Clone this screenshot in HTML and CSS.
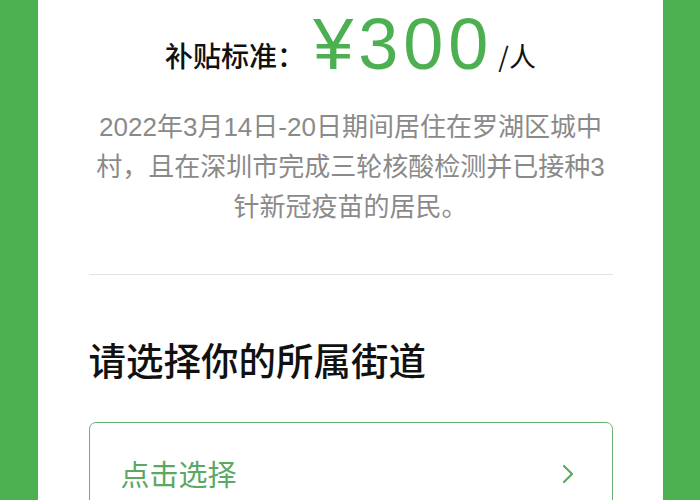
FILE: index.html
```html
<!DOCTYPE html>
<html lang="zh-CN">
<head>
    <meta charset="UTF-8">
    <meta name="viewport" content="width=device-width, initial-scale=1.0">
    <title>补贴申领</title>
    <link rel="stylesheet" href="styles.css">
</head>
<body>
    <div class="card">
        <div class="subsidy">
            <div class="price-row">
                <span class="price-label">补贴标准：</span>
                <span class="price-amount">¥300</span>
                <span class="price-unit">/人</span>
            </div>
            <p class="subsidy-desc">2022年3月14日-20日期间居住在罗湖区城中村，且在深圳市完成三轮核酸检测并已接种3针新冠疫苗的居民。</p>
        </div>

        <div class="street-section">
            <h2 class="section-title">请选择你的所属街道</h2>
            <div class="select-box">
                <span class="select-text">点击选择</span>
                <svg class="chevron" width="12" height="20" viewBox="0 0 12 20">
                    <polyline points="2,2 10,10 2,18" fill="none" stroke="#5aa862" stroke-width="2.2" stroke-linecap="round" stroke-linejoin="round"/>
                </svg>
            </div>
        </div>
    </div>
</body>
</html>
```

FILE: styles.css
```css
* {
    margin: 0;
    padding: 0;
    box-sizing: border-box;
}

body {
    font-family: "Liberation Sans", "Noto Sans CJK SC", sans-serif;
    background: #4caf50;
    height: 100vh;
    overflow: hidden;
}

.card {
    width: 625px;
    min-height: 100vh;
    margin: 0 auto;
    background: #fff;
    padding: 0 50px 0 51px;
}

.subsidy {
    border-bottom: 1px solid #e2e2e2;
    padding-bottom: 47px;
}

.price-row {
    display: flex;
    justify-content: center;
    align-items: baseline;
    padding-top: 8px;
    line-height: 1;
}

.price-label {
    font-family: "Noto Sans CJK SC", sans-serif;
    font-size: 28px;
    font-weight: 500;
    color: #111;
    margin-right: 8px;
    position: relative;
    top: -2px;
}

.price-amount {
    font-size: 72px;
    color: #4caf50;
    letter-spacing: 5px;
}

.price-unit {
    font-family: "Noto Sans CJK SC", sans-serif;
    font-size: 27px;
    color: #111;
    margin-left: 5px;
    position: relative;
    top: -2px;
}

.subsidy-desc {
    margin-top: 27px;
    font-family: "Liberation Sans", "Noto Sans CJK SC", sans-serif;
    font-size: 26px;
    line-height: 40px;
    color: #8a8a8a;
    text-align: center;
}

.street-section {
    padding-top: 58px;
}

.section-title {
    font-family: "Noto Sans CJK SC", sans-serif;
    font-size: 37.5px;
    font-weight: 500;
    line-height: 52px;
    color: #111;
}

.select-box {
    margin-top: 37px;
    border: 1.5px solid #6bb172;
    border-radius: 7px;
    height: 120px;
    display: flex;
    align-items: flex-start;
    justify-content: space-between;
    padding: 34px 38px 0 31px;
}

.select-text {
    font-family: "Noto Sans CJK SC", sans-serif;
    font-size: 29px;
    line-height: 32px;
    color: #5aa862;
}

.chevron {
    margin-top: 7px;
}
```
